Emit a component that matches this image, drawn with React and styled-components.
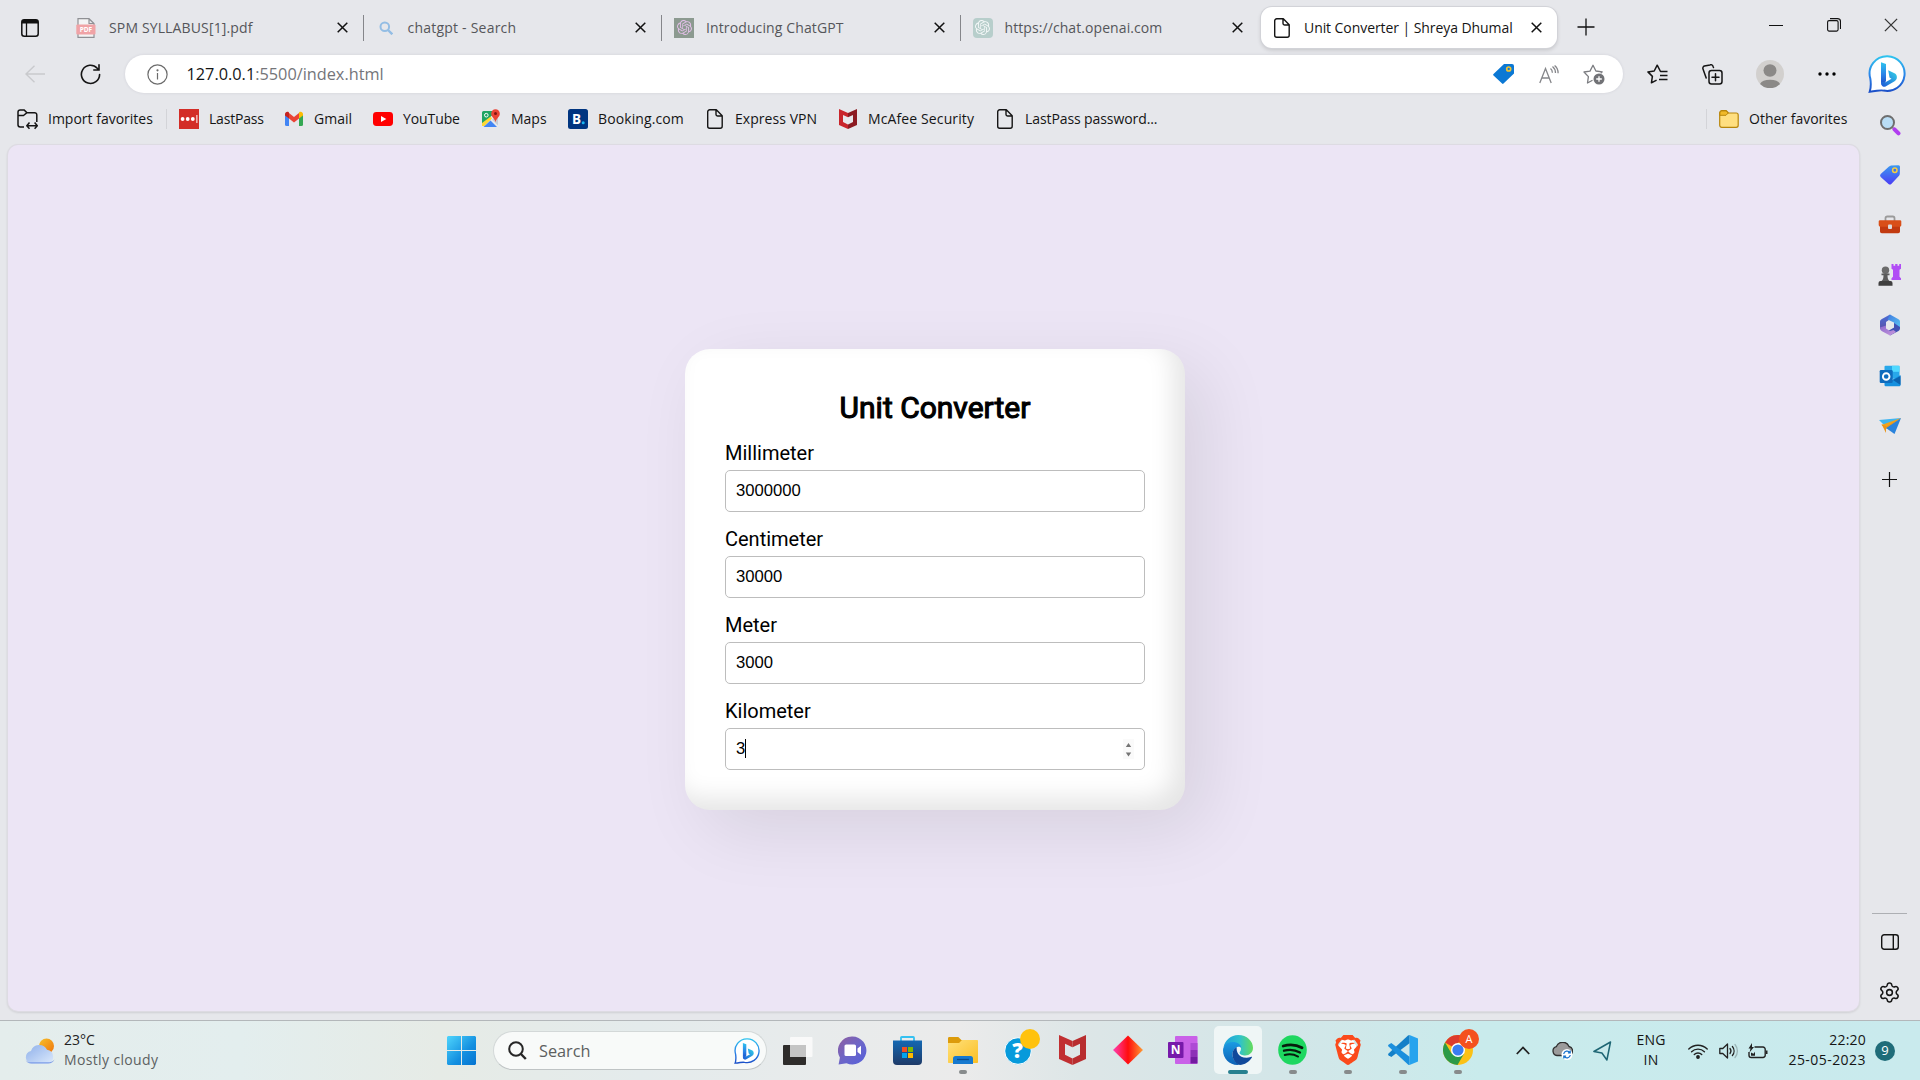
import React from "react";
import styled, { createGlobalStyle } from "styled-components";
import { SiOpenai, SiBrave } from "react-icons/si";
import { Settings } from "lucide-react";

const Global = createGlobalStyle`
  * { box-sizing: border-box; }
  body { margin: 0; background: #e6e7eb; overflow: hidden; }
`;

const ui = `"Open Sans", "Noto Sans", sans-serif`;

const Screen = styled.div`
  width: 1920px;
  height: 1080px;
  display: flex;
  flex-direction: column;
  background: #e6e7eb;
  font-family: ${ui};
  color: #111;
  svg { display: block; flex: none; }
`;

const Text = styled.span`
  font-size: ${(p) => p.$size || 14}px;
  letter-spacing: ${(p) => p.$track || 0}px;
  color: ${(p) => p.$color || "#151515"};
  line-height: 20px;
  white-space: nowrap;
`;

const TabStrip = styled.header`
  height: 51px;
  display: flex;
  align-items: flex-start;
`;

const TabMenu = styled.div`
  width: 64px;
  padding: 19px 0 0 21px;
`;

const Tab = styled.div`
  width: ${(p) => p.$w || 298.7}px;
  height: 41px;
  margin-top: 7px;
  display: flex;
  align-items: center;
  padding-left: 12px;
`;

const ActiveTab = styled(Tab)`
  width: 296px;
  height: 41px;
  margin: 7px 0 0 0;
  padding-left: 11px;
  background: #fff;
  border-radius: 11px;
  box-shadow: 0 0 0 1px #d2d3d8, 0 2px 4px rgba(0, 0, 0, 0.16);
`;

const TabTitle = styled(Text)`
  flex: 1;
  margin-left: ${(p) => p.$ml || 12}px;
`;

const TabClose = styled.div`
  width: 11px;
  margin-right: ${(p) => p.$mr || 15}px;
`;

const TabDivider = styled.div`
  width: 1px;
  height: 26px;
  background: #85868a;
`;

const NewTab = styled.div`
  padding: 12px 0 0 20px;
  margin-top: 6px;
`;

const WindowButtons = styled.div`
  margin-left: auto;
  display: flex;
  height: 49px;
`;

const WindowButton = styled.div`
  width: 57.5px;
  display: flex;
  align-items: center;
  justify-content: center;
`;

const Toolbar = styled.div`
  height: 46px;
  display: flex;
  align-items: center;
`;

const Slot = styled.div`
  width: ${(p) => p.$w}px;
  display: flex;
  flex: none;
  align-items: center;
  justify-content: center;
`;

const AddressBar = styled.div`
  width: 1498px;
  height: 38px;
  border-radius: 19px;
  background: #fff;
  box-shadow: 0 0 3px rgba(60, 60, 90, 0.12);
  display: flex;
  align-items: center;
  padding: 0 7px 0 22px;
`;

const Url = styled.div`
  flex: 1;
  margin-left: 18.5px;
`;

const Favorites = styled.nav`
  height: 48px;
  display: flex;
  align-items: center;
  padding: 0 0 4px 17px;
`;

const Bookmark = styled.div`
  width: ${(p) => p.$w}px;
  display: flex;
  align-items: center;
  gap: 10px;
`;

const FavDivider = styled.div`
  width: 1px;
  height: 20px;
  background: #d3d4d8;
  margin-right: 12px;
`;

const OtherFavorites = styled.div`
  margin-left: auto;
  width: 214px;
  display: flex;
  align-items: center;
`;

const Workspace = styled.div`
  height: 875px;
  display: flex;
`;

const Page = styled.main`
  width: 1851px;
  height: 866px;
  margin: 0 0 0 8px;
  border-radius: 10px;
  background: #ece5f5;
  box-shadow: 0 0 0 1px #dddbe2, 0 1px 3px rgba(0, 0, 0, 0.2);
  display: flex;
  justify-content: center;
  overflow: hidden;
`;

const Card = styled.section`
  width: 500px;
  height: 461px;
  margin: 204px 0 0 3px;
  padding: 41px 40px 40px;
  border-radius: 25px;
  background: #fff;
  box-shadow: 20px 20px 70px rgba(0, 0, 0, 0.09),
    inset -12px -12px 25px rgba(0, 0, 0, 0.1);
  font-family: Roboto, sans-serif;
  color: #000;
  display: flex;
  flex-direction: column;
  gap: 15px;
`;

const Title = styled.h1`
  margin: 0 0 1px;
  font-size: 30px;
  font-weight: 400;
  line-height: 35px;
  -webkit-text-stroke: 1.1px #000;
  text-align: center;
`;

const FieldGroup = styled.div`
  display: flex;
  flex-direction: column;
  gap: 6px;
`;

const Label = styled.label`
  font-size: 20px;
  line-height: 24px;
  margin-bottom: -1px;
`;

const Field = styled.div`
  height: 42px;
  border: 1px solid #bdbdbd;
  border-radius: 5px;
  display: flex;
  align-items: center;
  padding: 0 10px 1px 10px;
  font-family: "Liberation Sans", Arial, sans-serif;
  font-size: 16.67px;
`;

const Caret = styled.i`
  width: 1px;
  height: 19px;
  background: #000;
`;

const Stepper = styled.div`
  width: 11px;
  height: 20px;
  margin-left: auto;
  background: #fafafa;
`;

const Sidebar = styled.aside`
  flex: 1;
  display: flex;
  flex-direction: column;
  align-items: center;
`;

const SideItem = styled.div`
  height: ${(p) => p.$h || 50.1}px;
  width: 100%;
  display: flex;
  align-items: center;
  justify-content: center;
`;

const SideSearch = styled(SideItem)`
  margin-top: -45px;
`;

const SideDivider = styled.div`
  width: 35px;
  height: 1px;
  background: #adafb3;
  margin-top: auto;
`;

const SideEnd = styled.div`
  height: 5px;
`;

const Taskbar = styled.footer`
  height: 60px;
  border-top: 1px solid #b3b7ba;
  background: linear-gradient(90deg, #e4edec 0, #e3eeee 240px, #e6ebe6 440px, #e4ebec 640px, #ebebeb 960px, #dde6e7 1080px, #d3e6e8 1280px, #c9ebec 1480px, #c9eaed 100%);
  display: flex;
  align-items: center;
`;

const Weather = styled.div`
  width: 447px;
  padding-left: 25px;
  display: flex;
  align-items: center;
  gap: 9px;
`;

const Stack = styled.div`
  display: flex;
  flex-direction: column;
  align-items: ${(p) => p.$align || "flex-start"};
  width: ${(p) => (p.$w ? p.$w + "px" : "auto")};
  padding-bottom: ${(p) => p.$pb || 0}px;
`;

const SearchBox = styled.div`
  width: 274px;
  height: 39px;
  margin: 0 3.5px 0 16.5px;
  border-radius: 20px;
  background: #f8faf9;
  border: 1px solid #d3d8d8;
  border-bottom-color: #bfc4c5;
  display: flex;
  align-items: center;
  padding: 0 6px 0 14px;
`;

const Apps = styled.div`
  display: flex;
`;

const AppSlot = styled.div`
  width: 55.05px;
  height: 59px;
  display: grid;
  grid-template-rows: 5px 48px 6px;
  justify-items: center;
`;

const Tile = styled.div`
  grid-row: 2;
  width: 48px;
  height: 48px;
  display: flex;
  align-items: center;
  justify-content: center;
  border-radius: 5px;
  position: relative;
  background: ${(p) => (p.$active ? "rgba(255,255,255,.62)" : "none")};
`;

const Running = styled.i`
  position: absolute;
  bottom: 0;
  width: ${(p) => (p.$active ? 20 : 8)}px;
  height: 4px;
  border-radius: 2px;
  background: ${(p) => (p.$active ? "#27808f" : "#878b8c")};
`;

const Badge = styled.b`
  position: absolute;
  right: ${(p) => p.$r || 0}px;
  top: ${(p) => p.$t || 3}px;
  width: 20px;
  height: 20px;
  border-radius: 50%;
  background: ${(p) => p.$bg};
  color: #fff;
  font-size: 11px;
  font-weight: 400;
  line-height: 20px;
  text-align: center;
`;

const Tray = styled.div`
  margin-left: auto;
  display: flex;
  align-items: center;
`;

const Count = styled.div`
  width: 20px;
  height: 20px;
  margin: 0 25px 0 9px;
  border-radius: 50%;
  background: #1f6c79;
  color: #fff;
  font-size: 13px;
  line-height: 19px;
  text-align: center;
`;

const Cross = ({ s = 11, w = 1.5, c = "#111" }) => (
  <svg width={s} height={s} viewBox="0 0 11 11" stroke={c} strokeWidth={w} fill="none">
    <path d="M.7.7l9.6 9.6M10.3.7L.7 10.3" />
  </svg>
);

const Plus = () => (
  <svg width="18" height="18" viewBox="0 0 18 18" stroke="#111" strokeWidth="1.3">
    <path d="M9 .5v17M.5 9h17" />
  </svg>
);

const FileIcon = () => (
  <svg width="20" height="20" viewBox="0 0 20 20" fill="none" stroke="#151515" strokeWidth="1.4" strokeLinejoin="round">
    <path d="M4.7.8h6.6l5.9 6v10.400a2 2 0 0 1-2 2H4.700a2 2 0 0 1-2-2V2.800a2 2 0 0 1 2-2zM11 .9v4.400a1.700 1.700 0 0 0 1.700 1.700h4.400" />
  </svg>
);

const PdfIcon = () => (
  <svg width="20" height="20" viewBox="0 0 20 20">
    <path d="M2 7V.7h11L18 5.500V7M13 .7V5.500h5M2 16v3.300h16V16" fill="#f4f4f5" stroke="#8f9094" strokeWidth="1.200" />
    <rect x=".3" y="6.500" width="19.200" height="10" rx="1" fill="#f0a3a6" />
    <text x="9.900" y="14" fontSize="6.500" fontWeight="700" fill="#fff" textAnchor="middle" fontFamily="Open Sans">PDF</text>
  </svg>
);

const SearchBlue = () => (
  <svg width="14" height="14" viewBox="0 0 14 14" fill="none" stroke="#93bde4" strokeWidth="2">
    <circle cx="5.800" cy="5.800" r="4.300" />
    <path d="M9 9l4.300 4.300" strokeWidth="2.400" />
  </svg>
);

const McAfee = ({ w = 18, h = 20, left = "#c9252b", right = "#8c1b22" }) => (
  <svg width={w} height={h} viewBox="0 0 18 20" preserveAspectRatio="none">
    <path d="M0 0l9 4v4.200L4 5.900v7.200l5 2.500V20l-9-4z" fill={left} />
    <path d="M18 0L9 4v4.200l5-2.300v7.200l-5 2.500V20l9-4z" fill={right} />
  </svg>
);

const BingB = ({ s = 38, id }) => (
  <svg width={s} height={s} viewBox="0 0 38 38">
    <defs>
      <linearGradient id={id} x1="0" y1="0" x2="0" y2="1">
        <stop offset="0" stopColor="#2fc3ee" />
        <stop offset=".55" stopColor="#2a83e8" />
        <stop offset="1" stopColor="#1b4fc8" />
      </linearGradient>
      <linearGradient id={id + "b"} x1="0" y1="1" x2="1" y2="0">
        <stop offset="0" stopColor="#1b55d6" />
        <stop offset="1" stopColor="#35d5e8" />
      </linearGradient>
    </defs>
    <path d="M19.500 1.200a17.400 17.400 0 1 1-4 34.400c-2.600-.8-4.500.1-13.800 1.200C3.500 31 3 28 2.300 23.500A17.400 17.400 0 0 1 19.500 1.200z" fill="#fff" stroke={`url(#${id})`} strokeWidth="2" />
    <path d="M13 7.300l5 1.800v17l-2.200 3.300L13 27z" fill={`url(#${id})`} />
    <path d="M20.200 15.200l6.800 3.200a4.700 4.700 0 0 1-.8 8L18 31.200a3.300 3.300 0 0 1-5-3.200v-1l4.500.2 6-3.500-2-1.200z" fill={`url(#${id}b)`} />
  </svg>
);

const tabs = [
  { title: "SPM SYLLABUS[1].pdf", icon: <PdfIcon />, w: 299.5, ml: 13, track: 0.14 },
  { title: "chatgpt - Search", icon: <Slot $w={20}><SearchBlue /></Slot>, w: 298.5, ml: 12, track: 0.22 },
  { title: "Introducing ChatGPT", icon: <Favicon20 bg="#8c9a90" fg="#e3bfe8" />, w: 298.5, ml: 12, track: 0.12 },
  { title: "https://chat.openai.com", icon: <Favicon20 bg="#b7cecb" fg="#f4f8f8" round />, w: 300.5, ml: 12, track: 0.08 },
];

const FaviconBox = styled.div`
  width: 20px;
  height: 20px;
  display: flex;
  align-items: center;
  justify-content: center;
  background: ${(p) => p.$bg};
  color: ${(p) => p.$fg};
  border-radius: ${(p) => (p.$round ? 4 : 0)}px;
`;

function Favicon20({ bg, fg, round }) {
  return (
    <FaviconBox $bg={bg} $fg={fg} $round={round}>
      <SiOpenai size={15} />
    </FaviconBox>
  );
}

const BookmarkIcons = {
  lastpass: (
    <svg width="20" height="20" viewBox="0 0 20 20">
      <rect width="20" height="20" fill="#d32d27" />
      <circle cx="3.600" cy="10" r="1.900" fill="#fff" />
      <circle cx="8.700" cy="10" r="1.900" fill="#fff" />
      <circle cx="13.800" cy="10" r="1.900" fill="#fff" />
      <path d="M17.900 6v8" stroke="#fff" strokeWidth="1" />
    </svg>
  ),
  gmail: (
    <svg width="20" height="20" viewBox="0 0 20 20">
      <path d="M1 5v10.500A1.500 1.500 0 0 0 2.500 17H5V8z" fill="#4285f4" />
      <path d="M19 5v10.500a1.500 1.500 0 0 1-1.500 1.500H15V8z" fill="#34a853" />
      <path d="M15 4v5.500L19 6.400V5c0-2-2.200-3-3.700-1.900z" fill="#fbbc04" />
      <path d="M5 9.500V4l5 3.900L15 4v5.500l-5 3.900z" fill="#ea4335" />
      <path d="M1 5v1.400l4 3.100V4l-.3-.9C3.200 2 1 3 1 5z" fill="#c5221f" />
    </svg>
  ),
  youtube: (
    <svg width="20" height="20" viewBox="0 0 20 20">
      <rect y="3" width="20" height="14" rx="3.400" fill="#f00" />
      <path d="M8 7v6l5.300-3z" fill="#fff" />
    </svg>
  ),
  maps: (
    <svg width="20" height="20" viewBox="0 0 20 20">
      <rect x="1" y="2" width="16" height="16" rx="1.500" fill="#e8eaed" />
      <path d="M1 17V12L8 5.500l3 4L3.500 17z" fill="#fdd835" />
      <path d="M2.500 2H13v3L1 14V3.500A1.500 1.500 0 0 1 2.500 2z" fill="#1fa463" />
      <path d="M2.500 18L9.500 11.500l6.500 6.500z" fill="#4285f4" />
      <path d="M11 10.500l6 6V8z" fill="#c9ccd1" />
      <circle cx="5.300" cy="6.200" r="1.800" fill="none" stroke="#fff" strokeWidth="1" />
      <path d="M14.500.3a4.300 4.300 0 0 1 4.300 4.400c0 3.300-3.600 4.500-4.300 8.500-.7-4-4.300-5.200-4.300-8.500A4.300 4.300 0 0 1 14.500.3z" fill="#ea4335" />
      <circle cx="14.500" cy="4.600" r="1.500" fill="#811411" />
    </svg>
  ),
  booking: (
    <svg width="20" height="20" viewBox="0 0 20 20">
      <rect width="20" height="20" rx="2.500" fill="#003580" />
      <text x="4" y="15" fontSize="13.500" fontWeight="700" fill="#fff" fontFamily="Open Sans">B</text>
      <circle cx="15.200" cy="13.800" r="1.500" fill="#19b5f1" />
    </svg>
  ),
  file: <FileIcon />,
  mcafee: <Slot $w={20}><McAfee /></Slot>,
};

const bookmarks = [
  ["lastpass", "LastPass", 105, -0.2],
  ["gmail", "Gmail", 89, 0],
  ["youtube", "YouTube", 108, -0.1],
  ["maps", "Maps", 87, 0],
  ["booking", "Booking.com", 137, 0.1],
  ["file", "Express VPN", 133, 0.05],
  ["mcafee", "McAfee Security", 157, 0.12],
  ["file", "LastPass password...", 180, -0.09],
];

const fields = [
  ["Millimeter", "3000000"],
  ["Centimeter", "30000"],
  ["Meter", "3000"],
  ["Kilometer", "3"],
];

const SideIcons = {
  search: (
    <svg width="22" height="22" viewBox="0 0 22 22">
      <path d="M13 13l7 6.500" stroke="#a8a8a8" strokeWidth="2.500" />
      <path d="M15.500 15.300l4 4" stroke="#b13df0" strokeWidth="4" strokeLinecap="round" />
      <circle cx="8.500" cy="8.500" r="6.500" fill="#b9ddf5" stroke="#6e6e6e" strokeWidth="2" />
    </svg>
  ),
  tag: (
    <svg width="22" height="22" viewBox="0 0 22 22">
      <defs><linearGradient id="tg" x1="0" y1="0" x2="0" y2="1"><stop offset="0" stopColor="#3b9af0" /><stop offset="1" stopColor="#4b3df5" /></linearGradient></defs>
      <path d="M12 1.500l7.500-.3a1.500 1.500 0 0 1 1.500 1.500l-.2 7a3 3 0 0 1-1 2.200l-7.500 8a2 2 0 0 1-2.800 0l-7.800-7a2 2 0 0 1 0-2.800l8.300-7.700z" fill="url(#tg)" />
      <circle cx="15.800" cy="6.300" r="2.200" fill="#3f6ff0" stroke="#f7cf3c" strokeWidth="1.500" />
    </svg>
  ),
  tools: (
    <svg width="24" height="20" viewBox="0 0 24 20">
      <path d="M7.500 6V3.200c0-1 .7-1.700 1.700-1.700h5.600c1 0 1.700.7 1.700 1.700V6" fill="none" stroke="#9a9a9a" strokeWidth="1.800" />
      <path d="M2 9h20v7.500a1.800 1.800 0 0 1-1.800 1.800H3.800A1.800 1.800 0 0 1 2 16.500z" fill="#c23a10" />
      <path d="M2 5.300h20a1.300 1.300 0 0 1 1.300 1.300V10c0 1-.8 1.800-1.800 1.800h-19A1.800 1.800 0 0 1 .7 10V6.600A1.300 1.300 0 0 1 2 5.300z" fill="#d94f18" />
      <rect x="10" y="9.500" width="4" height="4.500" rx="1" fill="#dcdcdc" />
    </svg>
  ),
  chess: (
    <svg width="24" height="24" viewBox="0 0 24 24">
      <path d="M13.500 1h2v1.800h1.700V1h2.300v1.800h1.700V1h1.800v4.800l-1.500 1v7l1.500 1.500V17H13.500v-1.700l1.500-1.500v-7l-1.500-1z" fill="#b14df5" />
      <circle cx="7.500" cy="7.300" r="3.700" fill="#6b6b6b" />
      <path d="M3.500 10.500h8v1.800h-2c0 3 .5 4.600 2.500 6.200H3c2-1.600 2.500-3.200 2.500-6.200h-2z" fill="#5b5b5b" />
      <path d="M2.500 18h10a2 2 0 0 1 2 2v2.800H.5V20a2 2 0 0 1 2-2z" fill="#3f3f3f" />
    </svg>
  ),
  m365: (
    <svg width="22" height="22" viewBox="0 0 22 22">
      <defs>
        <linearGradient id="ma" x1="0" y1="0" x2="0" y2="1"><stop offset="0" stopColor="#4a6fd8" /><stop offset="1" stopColor="#5a50a8" /></linearGradient>
        <linearGradient id="mb" x1="0" y1="0" x2="1" y2="1"><stop offset="0" stopColor="#3f7be0" /><stop offset="1" stopColor="#5cc4f2" /></linearGradient>
        <linearGradient id="mc" x1="0" y1="0" x2="1" y2="1"><stop offset="0" stopColor="#8a68cc" /><stop offset="1" stopColor="#c99ade" /></linearGradient>
      </defs>
      <path d="M11 .5L2.500 5.200A2.500 2.500 0 0 0 1 7.500v7.800l6-1.800V8l5-3.500z" fill="url(#ma)" />
      <path d="M8.500 5.500L11 .5l8.500 4.700A2.500 2.500 0 0 1 21 7.500v7.300L15 12V8.500z" fill="url(#mb)" />
      <path d="M21 13v1.500a3 3 0 0 1-1.500 2.500L11 21.500 9 17l6-3.500V9z" fill="#4250b4" />
      <path d="M1 13.500c0 2 .5 2.800 2 3.700l8 4.300 6-3.400-2.500-2.200-3.500 1-4-2.300v-3z" fill="url(#mc)" />
      <path d="M11 7.300l3.700 2v3.900L11 15.300l-3.700-2.100V9.300z" fill="#e6e7eb" />
    </svg>
  ),
  outlook: (
    <svg width="22" height="22" viewBox="0 0 22 22">
      <rect x="5.500" y=".8" width="15" height="13" rx="1" fill="#28a8ea" />
      <path d="M13 .8h7.500v6H13z" fill="#50d9ff" />
      <path d="M5.500 12l7.500 3 8.500-5v10a1.200 1.200 0 0 1-1.200 1.200H6.700A1.200 1.200 0 0 1 5.500 20z" fill="#1490df" />
      <path d="M14 15l7.500 5v-9z" fill="#0a63b0" />
      <rect x=".7" y="5" width="13" height="13" rx="1.200" fill="#0f6cbd" />
      <circle cx="7.200" cy="11.500" r="3.300" fill="none" stroke="#fff" strokeWidth="1.900" />
    </svg>
  ),
  drop: (
    <svg width="22" height="18" viewBox="0 0 22 18">
      <path d="M0 3L22 1 7 10z" fill="#3fb5f0" />
      <path d="M2.500 8L22 1 8 12z" fill="#f0a21c" />
      <path d="M22 1L7 11l8.500 6z" fill="#2a83dc" />
      <path d="M2.500 7l5 2.500L22 1 7 11v5z" fill="#e8941a" />
    </svg>
  ),
};

const AppIcons = {
  view: (
    <svg width="31" height="29" viewBox="0 0 31 29">
      <rect x="1" y="9" width="23" height="20" rx="1" fill="#2e2c2b" />
      <rect x="8" y="1" width="22.500" height="20" rx="1" fill="#fbfbfb" opacity=".9" />
      <rect x="8" y="9" width="16" height="12" fill="#c4c4c4" />
    </svg>
  ),
  chat: (
    <svg width="29" height="29" viewBox="0 0 29 29">
      <defs><linearGradient id="ch" x1="0" y1="0" x2="1" y2="1"><stop offset="0" stopColor="#8f5e9f" /><stop offset=".5" stopColor="#6d66c8" /><stop offset="1" stopColor="#5560dc" /></linearGradient></defs>
      <path d="M14.500.5a14 14 0 1 1-6 26.700L.6 28.500l1.300-7A14 14 0 0 1 14.500.5z" fill="url(#ch)" />
      <rect x="6.500" y="8.500" width="11.500" height="11.500" rx="1.600" fill="#fff" />
      <path d="M19.500 12.500l3.500-2.700v9l-3.500-2.700z" fill="#fff" />
    </svg>
  ),
  store: (
    <svg width="29" height="29" viewBox="0 0 29 29">
      <defs><linearGradient id="st" x1="0" y1="0" x2="0" y2="1"><stop offset="0" stopColor="#1468b3" /><stop offset="1" stopColor="#1e3a68" /></linearGradient></defs>
      <path d="M8 6V1.800c0-.5.3-.8.800-.8h11.400c.5 0 .8.300.8.800V6" fill="none" stroke="#35c1f1" strokeWidth="1.800" />
      <path d="M0 4.500h29V25a4 4 0 0 1-4 4H4a4 4 0 0 1-4-4z" fill="url(#st)" />
      <path d="M9 11h5v5H9z" fill="#f25022" /><path d="M15 11h5v5h-5z" fill="#7fba00" />
      <path d="M9 17h5v5H9z" fill="#00a4ef" /><path d="M15 17h5v5h-5z" fill="#ffb900" />
    </svg>
  ),
  explorer: (
    <svg width="30" height="27" viewBox="0 0 30 27">
      <defs><linearGradient id="fx" x1="0" y1="0" x2="1" y2="1"><stop offset="0" stopColor="#ffe07a" /><stop offset="1" stopColor="#fbbf24" /></linearGradient></defs>
      <path d="M0 1.300C0 .6.600 0 1.300 0h9l3 3H29v6H0z" fill="#dc9b0b" />
      <path d="M0 6h11l3-3h15c.6 0 1 .4 1 1v21c0 .6-.4 1-1 1H1c-.6 0-1-.4-1-1z" fill="url(#fx)" />
      <path d="M5 27v-5.500A2.500 2.500 0 0 1 7.500 19h15a2.500 2.500 0 0 1 2.500 2.500V27z" fill="#1779cf" />
      <path d="M9 22.500h12" stroke="#0c4c8c" strokeWidth="1.300" />
    </svg>
  ),
  help: (
    <svg width="30" height="30" viewBox="0 0 30 30">
      <circle cx="15" cy="16" r="13.300" fill="#069adb" stroke="#fff" strokeWidth="1" />
      <text x="14.500" y="23.300" fontSize="21" fontWeight="800" fill="#fff" textAnchor="middle" fontFamily="Open Sans">?</text>
    </svg>
  ),
  mcafee: <McAfee w={27} h={30} left="#c12f31" right="#b82d2f" />,
  diamond: (
    <svg width="30" height="30" viewBox="0 0 30 30">
      <defs><linearGradient id="dm"><stop offset="0" stopColor="#ff3fb4" /><stop offset=".5" stopColor="#ff0d0d" /><stop offset="1" stopColor="#ff9c33" /></linearGradient></defs>
      <path d="M15 .5L30 15 15 29.500 0 15z" fill="url(#dm)" />
    </svg>
  ),
  onenote: (
    <svg width="30" height="28" viewBox="0 0 30 28">
      <rect x="7" y="0" width="22.500" height="28" rx="1" fill="#c961e8" />
      <path d="M22.500 7h7v7h-7z" fill="#ae4bd5" /><path d="M22.500 14h7v7h-7z" fill="#8d30b7" /><path d="M22.500 21h7v6.500h-7z" fill="#721ba0" />
      <rect x="0" y="6" width="15.500" height="16" rx="1" fill="#7719aa" />
      <text x="7.700" y="18.300" fontSize="12" fontWeight="700" fill="#fff" textAnchor="middle" fontFamily="Open Sans">N</text>
    </svg>
  ),
  edge: (
    <svg width="30" height="30" viewBox="0 0 30 30">
      <defs>
        <linearGradient id="e1"><stop offset="0" stopColor="#1ea0dc" /><stop offset=".55" stopColor="#2fc2cc" /><stop offset="1" stopColor="#64dc5a" /></linearGradient>
        <linearGradient id="e2" x1="0" y1="0" x2="0" y2="1"><stop offset="0" stopColor="#1b9be3" /><stop offset="1" stopColor="#0d61b5" /></linearGradient>
      </defs>
      <path d="M.6 12.200C2 5 8 0 15.200 0 24 0 30 6.300 30 12.800c0 4.600-3.500 7.700-7.800 7.700-3 0-5.600-1-5.600-2.700 0-1 1.400-1.700 1.400-4.300 0-3-3.200-5.300-7.300-5.300-5.200 0-8.500 2.500-10.100 4z" fill="url(#e1)" />
      <path d="M0 15c.4-4.500 4.500-8 9.700-8 4.900 0 8.600 2.600 8.600 6.200-1-1.500-2.500-1.800-4-1.200-3 1.200-5.300 4.700-4.800 8.600.5 4.400 3.500 7.400 7 9.200C7.600 31 0 24.500 0 15z" fill="url(#e2)" />
      <path d="M9.500 20.500c-.5-4 1.600-7.300 4.300-8.300-.8 4 1.600 10.800 10 10.600 2.300 0 3.900-.8 4.500-1 .6-.2.900.4.600.8C26.300 27 21.500 29.900 17 30c-4-1-7.100-5-7.500-9.500z" fill="#10499b" />
    </svg>
  ),
  spotify: (
    <svg width="29" height="30" viewBox="0 0 29 30">
      <ellipse cx="14.500" cy="15" rx="14.300" ry="14.800" fill="#1ed760" />
      <g fill="none" stroke="#071c0d" strokeLinecap="round">
        <path d="M5.200 11c6.500-1.900 13.500-1.200 18.800 1.800" strokeWidth="2.800" />
        <path d="M6 15.700c5.700-1.600 11.300-.9 16 1.800" strokeWidth="2.300" />
        <path d="M6.700 20c4.600-1.300 9.300-.8 13.400 1.600" strokeWidth="1.900" />
      </g>
    </svg>
  ),
  vscode: (
    <svg width="30" height="30" viewBox="0 0 30 30">
      <path d="M21.500 0L30 3.500v23L21.500 30z" fill="#26a3ee" />
      <path d="M21.500 8.200L3.300 22 .5 20.200c-.6-.5-.6-1.200 0-1.800L20 .6c.5-.4 1-.6 1.500-.6z" fill="#1480c8" />
      <path d="M21.500 21.800L3.300 8 .5 9.800c-.6.500-.6 1.200 0 1.800L20 29.400c.5.400 1 .6 1.500.6z" fill="#1b8fdd" />
    </svg>
  ),
  chrome: (
    <svg width="30" height="30" viewBox="0 0 30 30">
      <circle cx="15" cy="15" r="15" fill="#fbc116" />
      <path d="M15 15L2 7.500A15 15 0 0 1 28 7.500H15z" fill="#dd3b2d" />
      <path d="M2 7.500A15 15 0 0 0 14.500 30L21 18.800 15 15l-6.500 3.500z" fill="#2b9a48" />
      <circle cx="15" cy="15" r="7" fill="#fff" />
      <circle cx="15" cy="15" r="5.600" fill="#3b7df0" />
    </svg>
  ),
};

const BraveWrap = styled.div`
  width: 27px;
  height: 30px;
  display: flex;
  align-items: center;
  justify-content: center;
  color: #fb4a1c;
  background: radial-gradient(ellipse 9px 11px at 50% 48%, #fff 98%, transparent);
`;

const apps = [
  { k: "view" }, { k: "chat" }, { k: "store" }, { k: "explorer", run: true }, { k: "help" },
  { k: "mcafee" }, { k: "diamond" }, { k: "onenote" }, { k: "edge", run: true, active: true },
  { k: "spotify", run: true }, { k: "brave", run: true }, { k: "vscode", run: true }, { k: "chrome", run: true },
];

export default function App() {
  return (
    <>
      <Global />
      <Screen>
        <TabStrip>
          <TabMenu>
            <svg width="18" height="18" viewBox="0 0 18 18" fill="none">
              <rect x=".8" y=".8" width="16.400" height="16.400" rx="2.500" stroke="#111" strokeWidth="1.500" />
              <path d="M.8 2.800a2 2 0 0 1 2-2h12.400a2 2 0 0 1 2 2V4.500H.8z" fill="#111" />
              <path d="M5.500 4v13" stroke="#111" strokeWidth="1.300" />
            </svg>
          </TabMenu>
          {tabs.map((t, i) => (
            <Tab key={t.title} $w={t.w}>
              {t.icon}
              <TabTitle $color="#55565a" $ml={t.ml} $track={t.track}>{t.title}</TabTitle>
              <TabClose $mr={i === 3 ? 18 : 15}><Cross /></TabClose>
              {i < 3 && <TabDivider />}
            </Tab>
          ))}
          <ActiveTab>
            <FileIcon />
            <TabTitle $ml={12} $track={-0.07}>Unit Converter | Shreya Dhumal</TabTitle>
            <TabClose><Cross /></TabClose>
          </ActiveTab>
          <NewTab><Plus /></NewTab>
          <WindowButtons>
            <WindowButton><svg width="14" height="14" viewBox="0 0 14 14"><path d="M0 7.500h14" stroke="#111" /></svg></WindowButton>
            <WindowButton>
              <svg width="14" height="14" viewBox="0 0 14 14" fill="none" stroke="#111" strokeWidth="1.100">
                <rect x=".6" y="2.600" width="10.500" height="10.500" rx="1.500" />
                <path d="M3 .6h7.500a3 3 0 0 1 3 3V11" />
              </svg>
            </WindowButton>
            <WindowButton><Cross s={14} w={1} c="#333" /></WindowButton>
          </WindowButtons>
        </TabStrip>

        <Toolbar>
          <Slot $w={70}>
            <svg width="20" height="18" viewBox="0 0 20 18" fill="none" stroke="#c9cacd" strokeWidth="1.400"><path d="M20 9H1M9.500.8L1 9l8.500 8.200" /></svg>
          </Slot>
          <Slot $w={40}>
            <svg width="21" height="21" viewBox="0 0 21 21" fill="none" stroke="#151515" strokeWidth="1.600" strokeLinecap="round"><path d="M19.600 10.500A9.100 9.100 0 1 1 17.200 4.200L18.800 6M19 .8V6h-5.200" /></svg>
          </Slot>
          <Slot $w={15} />
          <AddressBar>
            <svg width="21" height="21" viewBox="0 0 21 21" fill="none" stroke="#6b6b6b" strokeWidth="1.200"><circle cx="10.500" cy="10.500" r="9.600" /><path d="M10.500 9v6.500" /><circle cx="10.500" cy="6.300" r=".5" fill="#6b6b6b" /></svg>
            <Url><Text $size={16.3}>127.0.0.1</Text><Text $size={16.3} $color="#74757a">:5500/index.html</Text></Url>
            <Slot $w={45}>
              <svg width="21" height="20" viewBox="0 0 21 20"><path d="M11 0h8a2 2 0 0 1 2 2v7.500L10.500 19.600a1 1 0 0 1-1.400 0L.5 11.500a1 1 0 0 1 0-1.400z" fill="#0b78d4" /><circle cx="15.700" cy="5" r="2" fill="#0b78d4" stroke="#f2c230" strokeWidth="1.700" /></svg>
            </Slot>
            <Slot $w={45}>
              <svg width="20" height="19" viewBox="0 0 20 19" fill="none" stroke="#85868a" strokeWidth="1.300"><path d="M.8 18L6.500 3.500 12.200 18M2.800 13h7.500M11.500 3.500c1.200 1 1.900 2.500 1.900 4.200M13.500 1.500c2 1.600 3 3.800 3 6.600M15.600.6c2.300 1.800 3.500 4.400 3.500 7.600" /></svg>
            </Slot>
            <Slot $w={45}>
              <svg width="22" height="21" viewBox="0 0 22 21"><path d="M9.500 16.200L4.500 19l.9-6.400L1 8l6-.9L10 1.300 12.900 7l6.300.9-1.500 1.500" fill="none" stroke="#7b7c80" strokeWidth="1.300" strokeLinejoin="round" /><circle cx="16" cy="15" r="5.500" fill="#717276" /><path d="M16 12.200v5.600M13.200 15h5.600" stroke="#fff" strokeWidth="1.300" /></svg>
            </Slot>
          </AddressBar>
          <Slot $w={7} />
          <Slot $w={55}>
            <svg width="21" height="20" viewBox="0 0 21 20" fill="none" stroke="#151515" strokeWidth="1.500" strokeLinejoin="round"><path d="M15.500 7.500h-2L10.200 1.200 7.200 7 .9 7.900l4.500 4.500-1 6.400 5.200-2.700M13 11.500h7.500M12 15.500h8.500M14 7.500h6.500" /></svg>
          </Slot>
          <Slot $w={55}>
            <svg width="21" height="21" viewBox="0 0 21 21" fill="none" stroke="#151515" strokeWidth="1.500" strokeLinejoin="round" strokeLinecap="round"><rect x="7" y="6.500" width="13" height="13.500" rx="2.500" /><path d="M13.500 9.800v7M10 13.300h7M4.200 14L1 5a2.300 2.300 0 0 1 1.400-3L8 .9a2.200 2.200 0 0 1 3 1.300l.5 1.300" /></svg>
          </Slot>
          <Slot $w={59}>
            <svg width="28" height="28" viewBox="0 0 28 28"><circle cx="14" cy="14" r="14" fill="#d2d0ce" /><ellipse cx="14" cy="10.500" rx="6.500" ry="6.200" fill="#8b8987" /><path d="M4 24a10.500 6 0 0 1 20 0 14 14 0 0 1-20 0z" fill="#8b8987" /></svg>
          </Slot>
          <Slot $w={56}>
            <svg width="18" height="4" viewBox="0 0 18 4"><circle cx="2" cy="2" r="1.700" /><circle cx="9" cy="2" r="1.700" /><circle cx="16" cy="2" r="1.700" /></svg>
          </Slot>
          <Slot $w={63}><BingB id="bg1" /></Slot>
        </Toolbar>

        <Favorites>
          <Bookmark $w={149}>
            <svg width="21" height="21" viewBox="0 0 21 21" fill="none" stroke="#151515" strokeWidth="1.500" strokeLinejoin="round"><path d="M7 18H3.200a2.200 2.200 0 0 1-2.200-2.200V3A2.200 2.200 0 0 1 3.200.9H7l3 2.800h7.500A2.200 2.200 0 0 1 19.800 6v7M1 6.500h5.500L10 3.700M12.500 13.500L9.800 16.800l2.700 3M9.800 16.800h10.500M17.600 13.500l2.700 3.300-2.700 3" /></svg>
            <Text>Import favorites</Text>
          </Bookmark>
          <FavDivider />
          {bookmarks.map(([k, label, w, tr]) => (
            <Bookmark key={label} $w={w}>{BookmarkIcons[k]}<Text $track={tr}>{label}</Text></Bookmark>
          ))}
          <OtherFavorites>
            <FavDivider />
            <Bookmark>
              <svg width="20" height="18" viewBox="0 0 20 18"><path d="M.7 3A2.200 2.200 0 0 1 3 .7h4.200L9.500 3h7.700a2 2 0 0 1 2 2v10.300a2 2 0 0 1-2 2H2.700a2 2 0 0 1-2-2z" fill="#ffdf80" stroke="#b8860b" strokeWidth="1.200" /><path d="M.9 3A2 2 0 0 1 3 .9h4L9.200 3 7 5.300H.9z" fill="#f0b929" stroke="#b8860b" /></svg>
              <Text>Other favorites</Text>
            </Bookmark>
          </OtherFavorites>
        </Favorites>

        <Body />

        <Taskbar>
          <Weather>
            <svg width="30" height="26" viewBox="0 0 30 26">
              <defs>
                <linearGradient id="sun" x1="0" y1="0" x2="1" y2="1"><stop offset="0" stopColor="#f6c12c" /><stop offset="1" stopColor="#f0730c" /></linearGradient>
                <linearGradient id="cl" x1="0" y1="0" x2="1" y2="1"><stop offset="0" stopColor="#8fb0ea" /><stop offset="1" stopColor="#dbe9fc" /></linearGradient>
              </defs>
              <circle cx="21.500" cy="8" r="7.500" fill="url(#sun)" />
              <path d="M7 25.500a6.300 6.300 0 0 1-1-12.500 8.600 8.600 0 0 1 16-1.200 7 7 0 0 1 1 13.700z" fill="url(#cl)" />
              <path d="M7 25.500a6.300 6.300 0 0 1-6.500-4c2 3.500 4 2.700 7 2.700h15c3 0 5-.2 7-2.700a7 7 0 0 1-6.500 4z" fill="#7e9de8" />
            </svg>
            <Stack $pb={2}>
              <Text $color="#222">23°C</Text>
              <Text $color="#5c6162" $track={0.36}>Mostly cloudy</Text>
            </Stack>
          </Weather>
          <svg width="29" height="29" viewBox="0 0 29 29">
            <defs><linearGradient id="win" gradientUnits="userSpaceOnUse" x1="0" y1="0" x2="29" y2="29"><stop offset="0" stopColor="#4fd5fc" /><stop offset=".6" stopColor="#138fe0" /><stop offset="1" stopColor="#0573d0" /></linearGradient></defs>
            <path d="M1 0h13v14H0V1zM15 0h13l1 1v13H15zM0 15h14v14H1l-1-1zM15 15h14v13l-1 1H15z" fill="url(#win)" />
          </svg>
          <SearchBox>
            <svg width="19" height="19" viewBox="0 0 19 19" fill="none" stroke="#262626" strokeWidth="2"><circle cx="8" cy="8" r="6.800" /><path d="M12.500 12.500l5.300 5.500" strokeWidth="2.400" /></svg>
            <TabTitle $size={16.3} $color="#5d5f60" $ml={12.5}>Search</TabTitle>
            <BingB s={26} id="bg2" />
          </SearchBox>
          <Apps>
            {apps.map((a) => (
              <AppSlot key={a.k}>
                <Tile $active={a.active}>
                  {a.k === "brave" ? <BraveWrap><SiBrave size={30} /></BraveWrap> : AppIcons[a.k]}
                  {a.k === "help" && <Badge $bg="#ffc20e" $r={2} $t={3} />}
                  {a.k === "chrome" && <Badge $bg="#f4511e" $r={3} $t={3}>A</Badge>}
                  {a.run && <Running $active={a.active} />}
                </Tile>
              </AppSlot>
            ))}
          </Apps>
          <Tray>
            <Slot $w={39}><svg width="14" height="9" viewBox="0 0 14 9" fill="none" stroke="#222" strokeWidth="1.800"><path d="M.8 8L7 1.500 13.200 8" /></svg></Slot>
            <Slot $w={40}>
              <svg width="21" height="18" viewBox="0 0 21 18"><path d="M5 13.500a4.500 4.500 0 0 1-.7-8.800A6.800 6.800 0 0 1 17 4.500a4.700 4.700 0 0 1 .5 9z" fill="#9b9b9b" stroke="#303030" strokeWidth="1.300" /><circle cx="15" cy="12.500" r="5.500" fill="#fff" /><path d="M11.700 12a3.400 3.400 0 0 1 6.200-1.400M18.300 13a3.400 3.400 0 0 1-6.200 1.400M18.200 8.500v2.300h-2.300M11.800 16.500v-2.300h2.300" fill="none" stroke="#1470cc" strokeWidth="1.200" /></svg>
            </Slot>
            <Slot $w={39}><svg width="19" height="20" viewBox="0 0 19 20" fill="none" stroke="#1e6674" strokeWidth="1.500" strokeLinejoin="round"><path d="M17.500 1L.9 10.500l8 1.500 5 7z" /></svg></Slot>
            <Slot $w={59}><Stack $align="center" $pb={1}><Text $track={0.15}>ENG</Text><Text $track={0.3}>IN</Text></Stack></Slot>
            <Slot $w={34}>
              <svg width="20" height="16" viewBox="0 0 20 16" fill="none" stroke="#222" strokeWidth="1.400" strokeLinecap="round"><path d="M.8 6a13 13 0 0 1 18.400 0M3.600 8.800a9 9 0 0 1 12.800 0M6.300 11.500a5.200 5.200 0 0 1 7.400 0" /><circle cx="10" cy="14" r="1.200" fill="#222" /></svg>
            </Slot>
            <Slot $w={28}>
              <svg width="20" height="16" viewBox="0 0 20 16" fill="none" stroke="#222" strokeWidth="1.300" strokeLinejoin="round" strokeLinecap="round"><path d="M.8 5.500h3L8.500 1v14l-4.700-4.500h-3zM11 5.500a4 4 0 0 1 0 5M13.400 3.500a7 7 0 0 1 0 9" /><path d="M16 1.500a10 10 0 0 1 0 13" stroke="#9bb5b7" /></svg>
            </Slot>
            <Slot $w={31}>
              <svg width="20" height="16" viewBox="0 0 20 16" fill="none" stroke="#222" strokeWidth="1.400"><path d="M6.500 4H15a2.200 2.200 0 0 1 2.200 2.200v6A2.200 2.200 0 0 1 15 14.500H3.200A2.200 2.200 0 0 1 1 12.300V9" /><path d="M4 0L.5 5.500h2L1.500 9.500 6 4H4z" fill="#222" stroke="none" /><path d="M3 12.700V9.500l2.500 1.200 1.500-2v4z" fill="#222" stroke="none" /><path d="M18 7.500h1.500v3.500H18z" fill="#222" stroke="none" /></svg>
            </Slot>
            <Stack $align="flex-end" $w={92.500} $pb={2}><Text $track={0.2}>22:20</Text><Text $track={0.45}>25-05-2023</Text></Stack>
            <Count>9</Count>
          </Tray>
        </Taskbar>
      </Screen>
    </>
  );
}

function Body() {
  return (
    <Workspace>
      <Page>
        <Card>
          <Title>Unit Converter</Title>
          {fields.map(([label, value]) => (
            <FieldGroup key={label}>
              <Label>{label}</Label>
              <Field>
                {value}
                {label === "Kilometer" && (
                  <>
                    <Caret />
                    <Stepper>
                      <svg width="11" height="20" viewBox="0 0 11 20"><path d="M5.500 4l2.700 4H2.800zM5.500 17.500l2.700-4H2.800z" fill="#757575" /></svg>
                    </Stepper>
                  </>
                )}
              </Field>
            </FieldGroup>
          ))}
        </Card>
      </Page>
      <Sidebar>
        <SideSearch>{SideIcons.search}</SideSearch>
        {["tag", "tools", "chess", "m365", "outlook", "drop"].map((k) => <SideItem key={k}>{SideIcons[k]}</SideItem>)}
        <SideItem $h={58}><svg width="15" height="15" viewBox="0 0 15 15" stroke="#111" strokeWidth="1.200"><path d="M7.500 0v15M0 7.500h15" /></svg></SideItem>
        <SideDivider />
        <SideItem $h={56}>
          <svg width="18" height="16" viewBox="0 0 18 16" fill="none" stroke="#151515" strokeWidth="1.400"><rect x=".7" y=".7" width="16.600" height="14.600" rx="2.500" /><path d="M12.300 1v14" /></svg>
        </SideItem>
        <SideItem $h={45}><Settings size={23} strokeWidth={1.6} color="#151515" /></SideItem>
        <SideEnd />
      </Sidebar>
    </Workspace>
  );
}
